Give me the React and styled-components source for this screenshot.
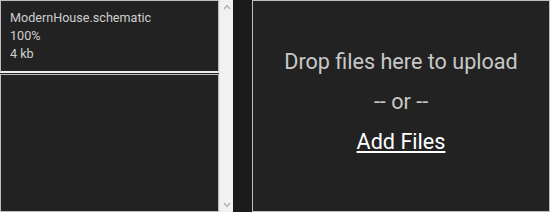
import React from 'react';
import styled, { createGlobalStyle } from 'styled-components';

const GlobalStyle = createGlobalStyle`
  html, body {
    margin: 0;
    padding: 0;
    background: #1b1b1b;
    font-family: Roboto, "Liberation Sans", sans-serif;
  }
`;

const Page = styled.div`
  display: flex;
  height: 212px;
  gap: 19px;
`;

const FileColumn = styled.div`
  display: flex;
  width: 233px;
  height: 212px;
`;

const FileList = styled.div`
  flex: 1;
  overflow: hidden;
  background: #222;
  display: flex;
  flex-direction: column;
`;

const FileItem = styled.div`
  flex: ${(p) => (p.$fill ? 1 : 'none')};
  padding: ${(p) => (p.$fill ? 0 : '8px 9px 8px')};
  border: 1px solid #bdbdbd;
  border-bottom: ${(p) => (p.$fill ? '1px solid #bdbdbd' : '2px solid #ececec')};
  color: #cfcfcf;
  font-size: 12.6px;
  line-height: 18px;
  margin-bottom: ${(p) => (p.$fill ? 0 : '1px')};
`;

const Scrollbar = styled.div`
  width: 14px;
  background: #f1f1f1;
  border-left: 1px solid #e6e6e6;
  display: flex;
  flex-direction: column;
  justify-content: space-between;
  align-items: center;
  padding: 4px 0;
  box-sizing: border-box;
`;

const Arrow = styled.svg`
  width: 8px;
  height: 6px;
  transform: ${(p) => (p.$down ? 'rotate(180deg)' : 'none')};
`;

const DropZone = styled.div`
  flex: 1;
  height: 212px;
  box-sizing: border-box;
  border: 1px solid #bdbdbd;
  background: #222;
  display: flex;
  flex-direction: column;
  align-items: center;
  padding-top: 48px;
  gap: 14px;
  font-size: 21.6px;
  line-height: 26px;
  color: #c8c8c8;
`;

const AddLink = styled.a`
  color: #fff;
  text-decoration: underline;
  cursor: pointer;
`;

const ArrowIcon = ({ down }) => (
  <Arrow $down={down} viewBox="0 0 8 6">
    <path d="M1 5 L4 1.5 L7 5" fill="none" stroke="#b0b0b0" strokeWidth="1.4" />
  </Arrow>
);

export default function App() {
  return (
    <>
      <GlobalStyle />
      <Page>
        <FileColumn>
          <FileList>
            <FileItem>
              <div>ModernHouse.schematic</div>
              <div>100%</div>
              <div>4 kb</div>
            </FileItem>
            <FileItem $fill />
          </FileList>
          <Scrollbar>
            <ArrowIcon />
            <ArrowIcon down />
          </Scrollbar>
        </FileColumn>
        <DropZone>
          <div>Drop files here to upload</div>
          <div>-- or --</div>
          <AddLink>Add Files</AddLink>
        </DropZone>
      </Page>
    </>
  );
}
